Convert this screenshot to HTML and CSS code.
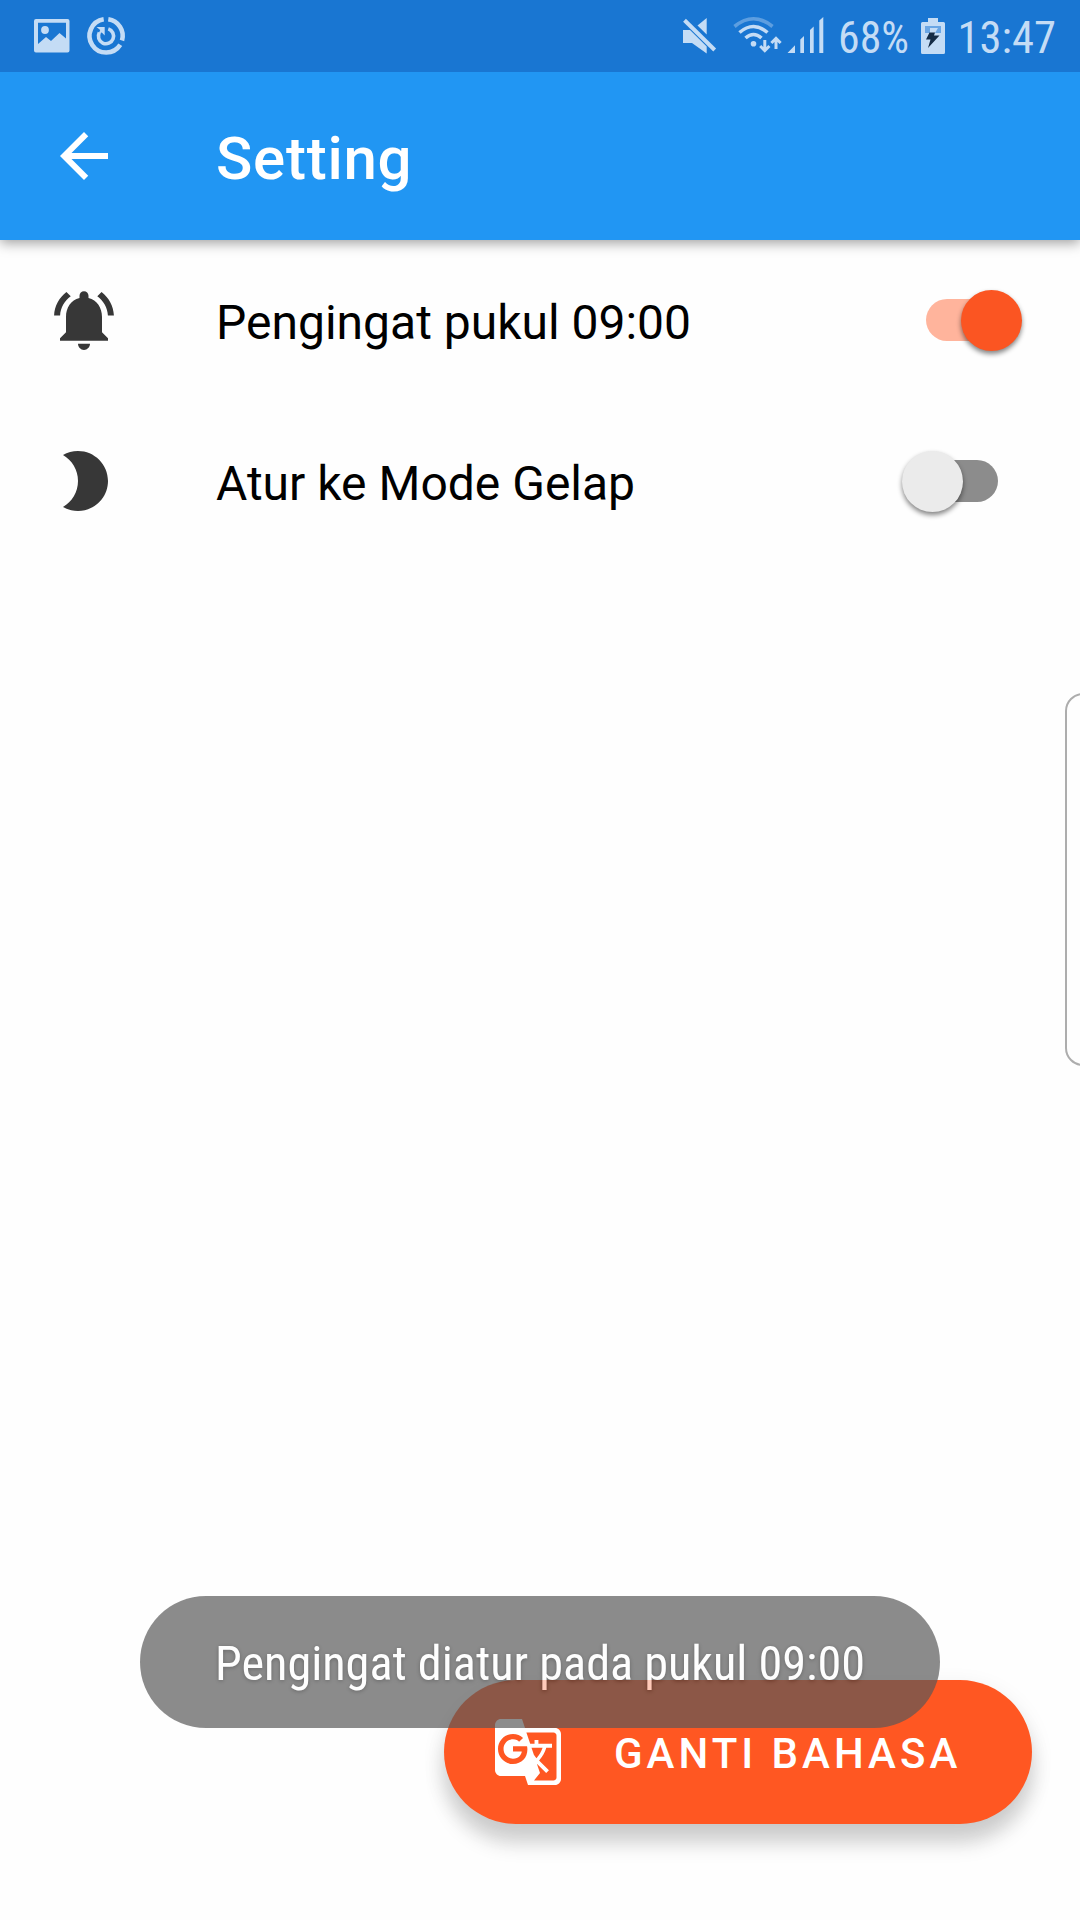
FILE: index.html
```html
<!DOCTYPE html>
<html lang="id">
<head>
<meta charset="utf-8">
<title>Setting</title>
<link rel="stylesheet" href="styles.css">
</head>
<body>
<div class="screen">
  <header class="status">
    <svg class="status-left" viewBox="34 0 92 72" width="92" height="72">
      <path fill-rule="evenodd" d="M36 19H67.5Q69.5 19 69.5 21V50.5Q69.5 52.5 67.5 52.5H36Q34 52.5 34 50.5V21Q34 19 36 19ZM38 22.700V44L46 37L51 41L59.500 33L66 38.500V22.700Z"/>
      <circle cx="45" cy="30" r="3.900"/>
      <g class="line" stroke-width="4.600">
        <path d="M103.700 19.300A16.700 16.700 0 1 0 120.300 44.800"/>
        <path d="M108.300 19.300A16.700 16.700 0 0 1 122 40.500"/>
      </g>
      <path class="line" stroke-width="3.600" d="M99.300 32.500A7.600 7.600 0 1 0 108.300 28.900"/>
      <path d="M96.500 27H104.700V35.500L101.800 32.500L98.500 34L100.200 30Z"/>
    </svg>
    <svg class="status-right" viewBox="680 0 400 72" width="400" height="72">
      <path d="M683 30H690L706.700 46.500V53.500L692 43H683ZM697.500 25.500L706.700 18V34.500Z"/>
      <path class="line" stroke-width="4" d="M684.500 20.300L714.700 50"/>
      <circle cx="753.500" cy="43.700" r="2.800"/>
      <g class="line" stroke-width="3.600">
        <path opacity=".4" d="M734.500 26.500Q753.500 11 772.500 26.500"/>
        <path d="M739.500 32.500Q753.500 20.500 767.500 32.500"/>
        <path d="M745.500 38Q753.500 31 761.500 38"/>
      </g>
      <g class="line" stroke-width="3">
        <path d="M764.800 40V50.500M760.200 46L764.800 50.700L769.400 46"/>
        <path d="M776 49V38.500M771.400 43L776 38.300L780.600 43"/>
      </g>
      <path d="M787.500 53L795 45.300V53ZM800.300 53V39.500L804 36V53ZM810 53V30L813.700 26.500V53ZM819.300 53V20.500L823.300 17V53Z"/>
      <text x="838" y="53.300" textLength="71" lengthAdjust="spacingAndGlyphs">68%</text>
      <path d="M928 18H938V22H943.500Q945 22 945 23.500V52.500Q945 54 943.500 54H922.500Q921 54 921 52.500V23.500Q921 22 922.500 22H928Z"/>
      <path fill="#6aa6e4" d="M925 26H941V33H925Z"/>
      <path fill="#c4dcf5" d="M930 28H938L935 33H930Z"/>
      <path fill="#142c46" d="M929.500 32.500H935L934 35.500H939.500L928 48L930.500 39.500H926Z"/>
      <text x="957.500" y="53.300" textLength="98.500" lengthAdjust="spacingAndGlyphs">13:47</text>
    </svg>
  </header>

  <nav class="appbar">
    <svg class="icon" viewBox="0 0 24 24"><path d="M20 11H7.830l5.590-5.590L12 4l-8 8 8 8 1.410-1.410L7.830 13H20v-2z"/></svg>
    <h1 class="title">Setting</h1>
  </nav>

  <main class="settings">
    <div class="row">
      <svg class="icon" viewBox="0 0 24 24"><path d="M7.580 3.730L6.150 2.300C3.750 4.130 2.170 6.950 2.030 10.150h2c.15-2.650 1.510-4.970 3.550-6.420zm12.390 6.420h2c-.15-3.200-1.730-6.020-4.120-7.850l-1.420 1.430c2.020 1.450 3.390 3.770 3.540 6.420zM18 10.650c0-3.070-1.640-5.640-4.500-6.320V3.600c0-.83-.67-1.500-1.500-1.500s-1.500.67-1.500 1.500v.73C7.630 5.010 6 7.570 6 10.650v5.100l-2 2v.85h16v-.85l-2-2v-5.100zM10 19.600c0 1.100.9 2.070 2 2.070s2-.97 2-2.070z"/></svg>
      <span class="label">Pengingat pukul 09:00</span>
      <span class="switch on"><span class="thumb"></span></span>
    </div>
    <div class="row row-dark">
      <svg class="icon" viewBox="0 0 24 24"><path d="M10 2c-1.820 0-3.530.5-5 1.350C7.990 5.080 10 8.300 10 12s-2.010 6.920-5 8.650C6.470 21.500 8.180 22 10 22c5.520 0 10-4.480 10-10S15.520 2 10 2z"/></svg>
      <span class="label">Atur ke Mode Gelap</span>
      <span class="switch"><span class="thumb"></span></span>
    </div>
  </main>

  <div class="edge-handle"></div>

  <button class="fab">
    <svg class="icon" viewBox="0 0 24 24"><path fill-rule="evenodd" d="M21 4H11l-1-3H3c-1.100 0-2 .9-2 2v15c0 1.100.9 2 2 2h8l1 3h9c1.100 0 2-.9 2-2V6c0-1.100-.9-2-2-2zM7 16c-2.760 0-5-2.240-5-5s2.240-5 5-5c1.350 0 2.480.5 3.350 1.300L9.030 8.570c-.38-.36-1.040-.78-2.030-.78-1.740 0-3.150 1.440-3.150 3.210S5.260 14.210 7 14.210c2.010 0 2.840-1.440 2.920-2.410H7v-1.710h4.680c.07.31.12.61.12 1.020C11.800 13.970 9.890 16 7 16zm6.170-5.420h3.700c-.43 1.250-1.110 2.430-2.050 3.470-.31-.35-.6-.72-.86-1.100l-.79-2.370zm8.330 9.920c0 .55-.45 1-1 1H14l2-2.500-1.040-3.100 3.100 3.100.92-.92-3.300-3.250.02-.02c1.130-1.250 1.930-2.690 2.400-4.220H20v-1.300h-4.530V8h-1.290v1.290h-1.440L11.460 5.500h9.040c.55 0 1 .45 1 1v14z"/></svg>
    <span class="fab-label">GANTI BAHASA</span>
  </button>

  <div class="toast">
    <svg viewBox="0 0 800 132" width="800" height="132"><text x="75" y="84" textLength="650" lengthAdjust="spacingAndGlyphs">Pengingat diatur pada pukul 09:00</text></svg>
  </div>
</div>
</body>
</html>
```
FILE: styles.css
```css
* { box-sizing: border-box; }
body { margin: 0; font-family: Roboto, sans-serif; }
.screen {
  position: relative;
  width: 1080px;
  height: 1920px;
  overflow: hidden;
  background: #fefefe;
}
.icon { flex: none; width: 72px; height: 72px; fill: currentColor; }

.status {
  position: relative;
  z-index: 1;
  display: flex;
  justify-content: space-between;
  height: 72px;
  padding-left: 34px;
  background: #1976d2;
  fill: #c4dcf5;
}
.status svg { display: block; overflow: visible; }
.status .line { fill: none; stroke: #c4dcf5; }
.status text {
  font-family: "Roboto Condensed", Roboto, sans-serif;
  font-size: 45px;
  font-stretch: 75%;
}

.appbar {
  display: flex;
  align-items: center;
  gap: 96px;
  height: 168px;
  padding: 0 48px;
  background: #2196f3;
  color: #fff;
  box-shadow: 0 3px 12px rgba(0, 0, 0, .38);
}
.title {
  margin: 6px 0 0;
  font-size: 60px;
  font-weight: 500;
  line-height: 72px;
  letter-spacing: .75px;
}

.settings { padding-top: 1px; }
.row {
  display: flex;
  align-items: center;
  height: 160px;
  padding: 0 82px 0 48px;
  color: #373737;
}
.label {
  flex: 1;
  margin-left: 96px;
  padding-top: 3px;
  color: #000;
  font-size: 48px;
  line-height: 56px;
}
.row-dark .label { padding-top: 5px; }
.switch {
  position: relative;
  width: 72px;
  height: 42px;
  border-radius: 21px;
  background: #8c8c8c;
}
.thumb {
  position: absolute;
  top: -9px;
  left: -24px;
  width: 61px;
  height: 61px;
  border-radius: 50%;
  background: #ebebeb;
  box-shadow: 0 3px 5px rgba(0, 0, 0, .48);
}
.switch.on { margin-top: -2px; background: #ffb49c; }
.switch.on .thumb { left: 35px; background: #fb5522; }

.edge-handle {
  position: absolute;
  top: 693px;
  left: 1065px;
  width: 40px;
  height: 373px;
  border: 2px solid #adadad;
  border-radius: 18px;
}

.fab {
  position: absolute;
  right: 48px;
  bottom: 96px;
  display: flex;
  align-items: center;
  width: 588px;
  height: 144px;
  padding: 0 48px;
  border: 0;
  border-radius: 72px;
  background: #ff5722;
  color: #fff;
  font-family: inherit;
  box-shadow: 0 20px 20px rgba(0, 0, 0, .15), 0 8px 24px rgba(0, 0, 0, .09);
}
.fab-label {
  margin-left: 50px;
  padding-top: 3px;
  font-size: 42px;
  font-weight: 500;
  letter-spacing: 4px;
  white-space: nowrap;
}

.toast {
  position: absolute;
  top: 1596px;
  left: 140px;
  width: 800px;
  height: 132px;
  border-radius: 66px;
  background: #585858;
  opacity: .685;
}
.toast svg { display: block; overflow: visible; fill: #fff; }
.toast text {
  font-family: "Roboto Condensed", Roboto, sans-serif;
  font-size: 48px;
  font-stretch: 75%;
  text-shadow: 0 1px 4px rgba(0, 0, 0, .6);
}
```
